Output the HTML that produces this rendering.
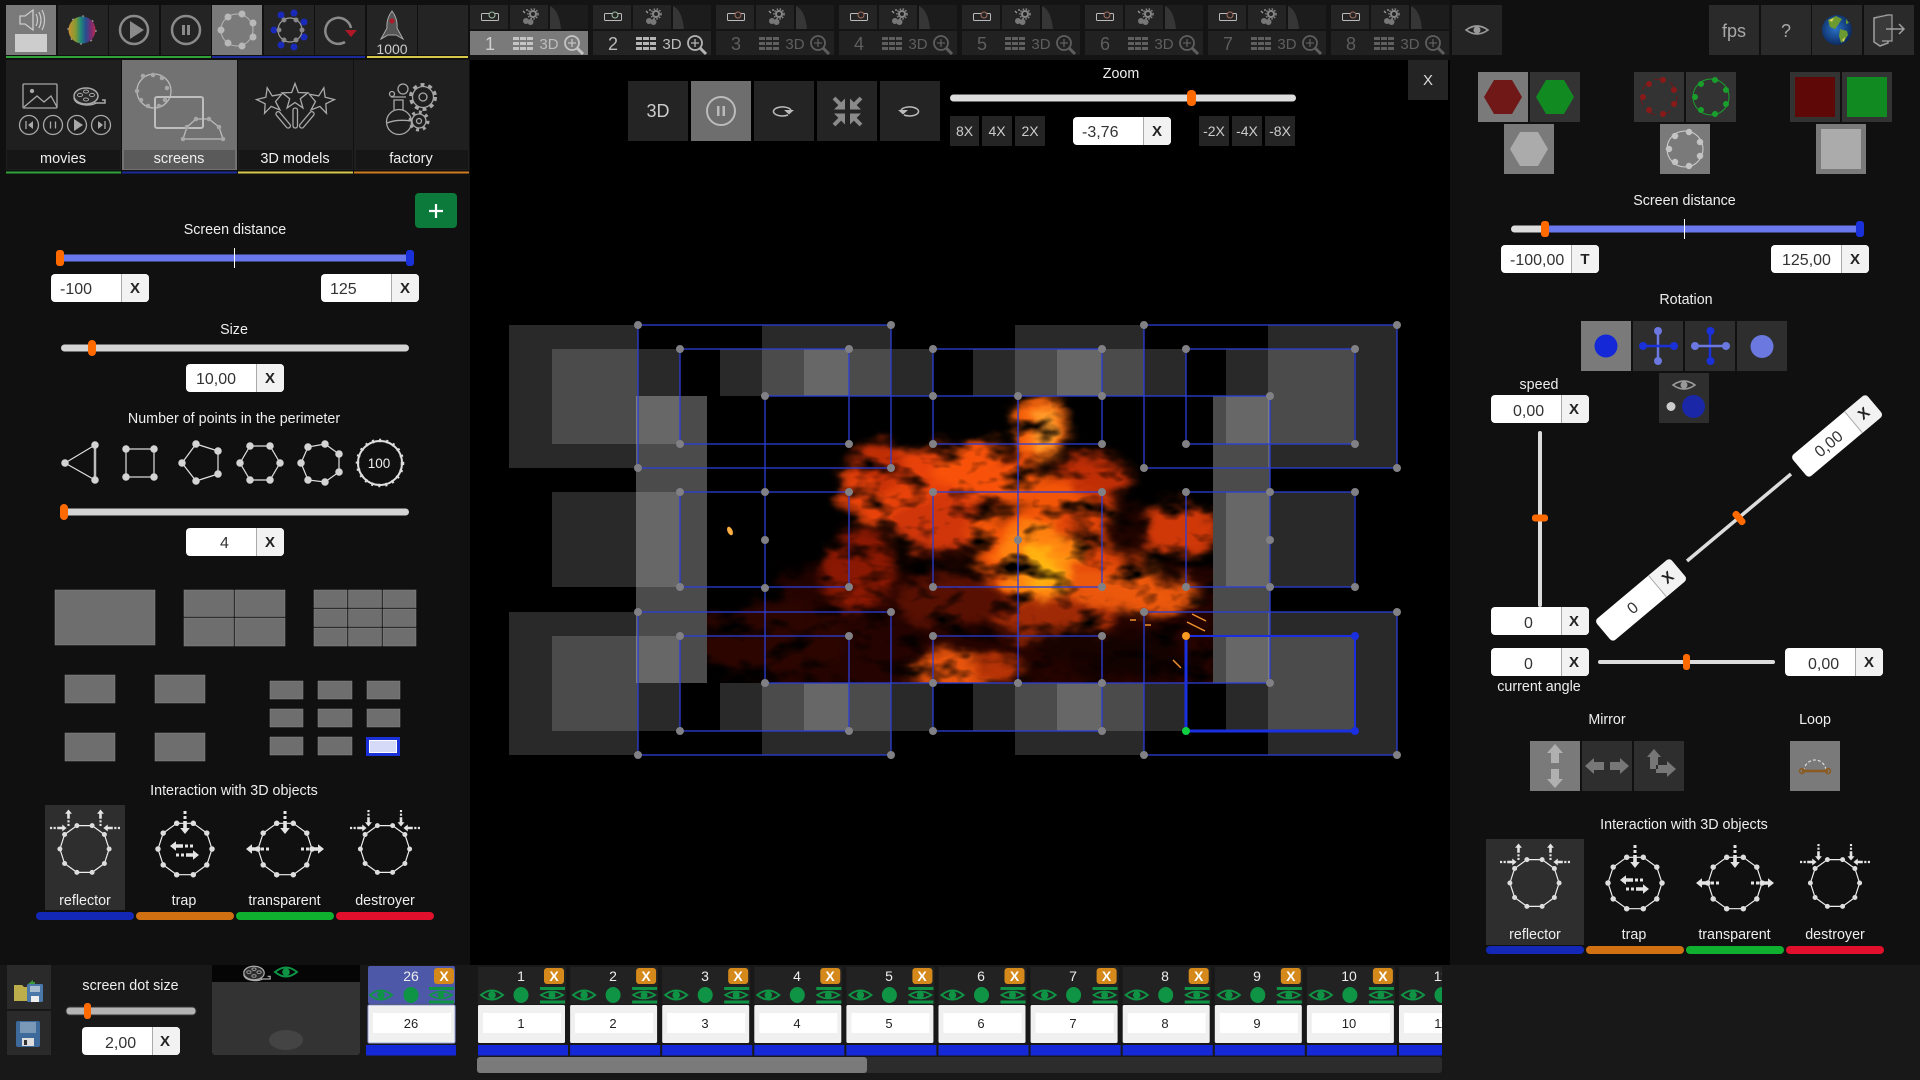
<!DOCTYPE html>
<html><head><meta charset="utf-8"><title>Screens</title>
<style>
html,body{margin:0;padding:0;background:#000;width:1920px;height:1080px;overflow:hidden}
svg{display:block;position:absolute;left:0;top:0}
text{font-family:"Liberation Sans",sans-serif}
.l{font-size:14.300px;fill:#eee;text-anchor:middle}
.v{font-size:16px;fill:#333}
.x{font-size:15px;font-weight:bold;fill:#222;text-anchor:middle}
.b{font-size:14px;fill:#ccc;text-anchor:middle}
.n{font-size:18px;text-anchor:middle}
.d{font-size:15px;text-anchor:middle}
.w{font-size:14px;fill:#eee;text-anchor:middle}
.k{font-size:13px;fill:#222;text-anchor:middle}
.xw{font-size:14px;font-weight:bold;fill:#fff;text-anchor:middle}
</style></head><body>
<svg width="1920" height="1080" viewBox="0 0 1920 1080" xmlns="http://www.w3.org/2000/svg">
<defs>
<filter id="fl" x="0" y="0" width="1" height="1" color-interpolation-filters="sRGB">
<feGaussianBlur in="SourceGraphic" stdDeviation="5" result="a"/>
<feTurbulence type="fractalNoise" baseFrequency=".028 .05" numOctaves="3" seed="7" result="n"/>
<feDisplacementMap in="a" in2="n" scale="26" xChannelSelector="R" yChannelSelector="G" result="d"/>
<feColorMatrix in="n" type="matrix" values="3 0 0 0 -.55  3 0 0 0 -.55  3 0 0 0 -.55  0 0 0 0 1" result="m"/>
<feBlend in="d" in2="m" mode="multiply"/>
</filter>
<linearGradient id="rb" x1="0" x2="1" y1="0" y2="0"><stop offset="0" stop-color="#c89030"/><stop offset=".25" stop-color="#8a9a30"/><stop offset=".45" stop-color="#208a78"/><stop offset=".65" stop-color="#2a4a90"/><stop offset=".85" stop-color="#802a70"/><stop offset="1" stop-color="#b83050"/></linearGradient>
<radialGradient id="gl" cx=".45" cy=".45" r=".6"><stop offset="0" stop-color="#2a72c8"/><stop offset="1" stop-color="#0a2458"/></radialGradient>
<g id="ib"><rect width="98" height="28" rx="4" fill="#fff"/><path d="M70 0h24a4 4 0 0 1 4 4v20a4 4 0 0 1-4 4h-24z" fill="#f2f2f2"/><path d="M70.500 0v28" stroke="#aaa"/></g>
<g id="pg"><rect x="0" y="5" width="38" height="24" fill="#242424"/><rect x="40" y="5" width="38" height="24" fill="#242424"/><rect x="80" y="5" width="38" height="24" fill="#1c1c1c"/><path d="M80 6q9 4 11 23h-11z" fill="#363636"/><rect x="11.500" y="13.500" width="17" height="7" rx="1" fill="none" stroke="#bbb"/><circle cx="22" cy="15" r="3" fill="#242424" stroke="currentColor"/><circle cx="63" cy="14" r="3" fill="none" stroke="#888" stroke-width="2"/><circle cx="63" cy="14" r="5" fill="none" stroke="#888" stroke-width="1.500" stroke-dasharray="1.500 1.500"/><circle cx="56" cy="21" r="3" fill="#777"/><circle cx="60.500" cy="22" r="3" fill="#777"/><path d="M53 11l2 2M57 9v2" stroke="#999" stroke-width="1.300"/></g>
<g id="pb" fill="none" stroke="currentColor"><path d="M43 38.500h20M43 43.500h20M43 48.500h20" stroke-width="3" stroke-dasharray="6 1"/><circle cx="102" cy="43" r="7" stroke-width="1.800"/><path d="M107 48l6 6" stroke-width="3"/><path d="M98 43h8M102 39v8" stroke-width="1.300"/></g>
<g id="eye"><path d="M-11 0Q0-9 11 0Q0 9-11 0z" fill="none" stroke="#0f9445" stroke-width="2"/><circle r="3.800" fill="#0f9445"/></g>
<g id="gb"><path d="M-11 0Q0-8 11 0Q0 8-11 0z" fill="none" stroke="#999" stroke-width="1.600"/><circle r="3.500" fill="#999"/></g>
<g id="reel"><ellipse cx="0" cy="0" rx="12" ry="8" fill="#2a2a2a" stroke="#aaa" stroke-width="1.500"/><path d="M-12 2q1 6 12 7 7 0 10-2" fill="none" stroke="#aaa" stroke-width="1.500"/><g fill="#222" stroke="#aaa"><ellipse cx="-6" cy="-1" rx="2.500" ry="1.600"/><ellipse cx="6" cy="-1" rx="2.500" ry="1.600"/><ellipse cx="0" cy="-4.500" rx="2.500" ry="1.500"/><ellipse cx="0" cy="3.500" rx="2.500" ry="1.500"/></g><path d="M8 7h11v-3h-3" fill="none" stroke="#aaa" stroke-width="1.500"/></g>
<g id="cell"><rect y="967" width="88" height="37" fill="#222"/><use href="#eye" x="14" y="995"/><ellipse cx="43" cy="995" rx="7.500" ry="8" fill="#0f9445"/><path d="M63 995q11-7 22 0q-11 7-22 0z" fill="none" stroke="#0f9445" stroke-width="1.800"/><circle cx="74" cy="995" r="3.500" fill="#0f9445"/><path d="M62 988.500h25M62 1002h25" stroke="#0f9445" stroke-width="3"/><rect x="66" y="968" width="20" height="16" rx="3" fill="#d4891a"/><rect x="0" y="1005" width="87" height="38" rx="1.500" fill="#f0f0f0"/><rect x="5" y="1013" width="78" height="20" fill="#fff"/><rect x="0" y="1045" width="90" height="10.500" fill="#1428d8"/></g>
<g id="ar"><path d="M0-1.500h3v3h-3zM5-1.500h3v3h-3z" fill="#e4e4e4"/><path d="M10-1.800h7v-3l6 4.800-6 4.800v-3h-7z" fill="#e4e4e4"/></g>
<g id="r1"><polygon points="7.600,-23.400 19.900,-14.500 24.600,0 19.900,14.500 7.600,23.400 -7.600,23.400 -19.900,14.500 -24.600,0 -19.900,-14.500 -7.600,-23.400" fill="none" stroke="#eee" stroke-width="1.200"/><path d="M7.600-23.400h0M19.900-14.500h0M24.600 0h0M19.900 14.500h0M7.600 23.400h0M-7.600 23.400h0M-19.900 14.500h0M-24.600 0h0M-19.900-14.500h0M-7.600-23.400h0" stroke="#ddd" stroke-width="5" stroke-linecap="round"/></g>
<g id="r2"><polygon points="8.300,-25.700 21.800,-15.900 27,0 21.800,15.900 8.300,25.700 -8.300,25.700 -21.800,15.900 -27,0 -21.800,-15.900 -8.300,-25.700" fill="none" stroke="#eee" stroke-width="1.200"/><path d="M8.300-25.700h0M21.800-15.900h0M27 0h0M21.800 15.900h0M8.300 25.700h0M-8.300 25.700h0M-21.800 15.900h0M-27 0h0M-21.800-15.900h0M-8.300-25.700h0" stroke="#ddd" stroke-width="5.500" stroke-linecap="round"/></g>
<g id="inter">
<use href="#r1" x="84.500" y="849"/><use href="#r2" x="185" y="849"/><use href="#r2" x="285" y="849"/><use href="#r1" x="385" y="849"/>
<use href="#ar" transform="translate(50 828) scale(.72)"/><use href="#ar" transform="translate(120 828) rotate(180) scale(.72)"/><use href="#ar" transform="translate(68.500 826) rotate(-90) scale(.72)"/><use href="#ar" transform="translate(100.500 826) rotate(-90) scale(.72)"/>
<use href="#ar" transform="translate(350 828) scale(.72)"/><use href="#ar" transform="translate(420 828) rotate(180) scale(.72)"/><use href="#ar" transform="translate(368.500 810) rotate(90) scale(.72)"/><use href="#ar" transform="translate(401 810) rotate(90) scale(.72)"/>
<use href="#ar" transform="translate(185 811) rotate(90)"/><use href="#ar" transform="translate(193 846) rotate(180)"/><use href="#ar" transform="translate(176 855)"/>
<use href="#ar" transform="translate(285 811) rotate(90)"/><use href="#ar" transform="translate(269 849) rotate(180)"/><use href="#ar" transform="translate(301 849)"/>
<rect x="36" y="912" width="98" height="8" rx="4" fill="#1428b8"/><rect x="136" y="912" width="98" height="8" rx="4" fill="#d07010"/><rect x="236" y="912" width="98" height="8" rx="4" fill="#0fb030"/><rect x="336" y="912" width="98" height="8" rx="4" fill="#e0102c"/>
</g>
<polygon id="star" points="0,-13.500 3.300,-4.500 12.800,-4.200 5.300,1.700 7.900,10.900 0,5.500 -7.900,10.900 -5.300,1.700 -12.800,-4.200 -3.300,-4.500" fill="none" stroke="#aaa" stroke-width="1.300"/>
<clipPath id="fc"><rect x="707" y="396" width="506" height="287"/></clipPath>
<clipPath id="sc"><rect x="478" y="960" width="964" height="100"/></clipPath>
</defs>

<!-- backgrounds -->
<rect width="1920" height="1080" fill="#000"/>
<rect width="470" height="965" fill="#101010"/>
<rect x="470" width="980" height="60" fill="#141414"/>
<rect x="1450" width="470" height="965" fill="#101010"/>
<rect y="965" width="1920" height="115" fill="#181818"/>

<!-- top-left buttons -->
<rect x="6" y="5" width="50" height="50" fill="#7a7a7a"/>
<rect x="58" y="5" width="50" height="50" fill="#242424"/><rect x="109" y="5" width="50" height="50" fill="#242424"/><rect x="161" y="5" width="50" height="50" fill="#242424"/>
<rect x="212" y="5" width="50" height="50" fill="#7a7a7a"/>
<rect x="264" y="5" width="50" height="50" fill="#242424"/><rect x="315" y="5" width="50" height="50" fill="#242424"/><rect x="367" y="5" width="50" height="50" fill="#242424"/><rect x="418" y="5" width="50" height="50" fill="#242424"/>
<path d="M6 57h205" stroke="#2fa33a" stroke-width="2"/><path d="M212 57h153" stroke="#1a2a9a" stroke-width="2"/><path d="M367 57h101" stroke="#d8c84a" stroke-width="2"/>
<path d="M20 16h5l8-6v20l-8-6h-5z" fill="none" stroke="#ccc" stroke-width="1.300"/><path d="M36 14q3 6 0 12M39 12q4 8 0 16M42 10q5 10 0 20" fill="none" stroke="#ccc" stroke-width="1.200"/><rect x="15" y="34" width="32" height="18" fill="#cdcdcd"/>
<circle cx="82" cy="30" r="13.500" fill="url(#rb)"/><circle cx="82" cy="30" r="14" fill="none" stroke="#999" stroke-width="1.200" stroke-dasharray="2 9"/>
<circle cx="134" cy="30" r="14" fill="none" stroke="#8a8a8a" stroke-width="2.500"/><path d="M130 21l14 9-14 9z" fill="#8a8a8a"/>
<circle cx="186" cy="30" r="14" fill="none" stroke="#8a8a8a" stroke-width="2.500"/><path d="M182 25h3v10h-3zM187 25h3v10h-3z" fill="#8a8a8a"/>
<g stroke="#b8b8b8"><circle cx="237" cy="30" r="16" fill="none" stroke-width="1"/><path d="M228 17h0M242 14h0M253 23h0M253 37h0M242 46h0M228 43h0M221 30h0" stroke-width="7" stroke-linecap="round"/></g>
<g><path d="M281 15h0M294 13h0M304 22h0M304 37h0M294 47h0M281 45h0M274 30h0" stroke="#1a2ab8" stroke-width="7" stroke-linecap="round"/><circle cx="290" cy="30" r="12" fill="none" stroke="#999" stroke-width="1.200"/><path d="M284 20h0M296 20h0M302 30h0M296 40h0M284 40h0M279 30h0" stroke="#888" stroke-width="5" stroke-linecap="round"/></g>
<path d="M351 28A13 13 0 1 0 345 42" fill="none" stroke="#8a8a8a" stroke-width="2.500"/><path d="M345 30h12l-6 7z" fill="#b01828"/>
<path d="M392 11q6 8 5 17l6 11-7-4h-8l-7 4 6-11q-1-9 5-17z" fill="#555" stroke="#aaa"/><circle cx="392" cy="21" r="2.500" fill="#b01828"/><text x="392" y="54" font-size="14" fill="#ccc" text-anchor="middle">1000</text>

<!-- tabs -->
<rect x="6" y="60" width="115" height="110" fill="#1f1f1f"/><rect x="122" y="60" width="115" height="110" fill="#727272"/><rect x="238" y="60" width="115" height="110" fill="#1f1f1f"/><rect x="354" y="60" width="115" height="110" fill="#1f1f1f"/>
<rect x="7" y="150" width="113" height="19" fill="#161616"/><rect x="124" y="150" width="111" height="19" fill="#5a5a5a"/><rect x="239" y="150" width="113" height="19" fill="#161616"/><rect x="356" y="150" width="112" height="19" fill="#161616"/>
<path d="M6 172.500h115" stroke="#2fa33a" stroke-width="2"/><path d="M122 172.500h115" stroke="#1a2a9a" stroke-width="2"/><path d="M238 172.500h115" stroke="#d8c84a" stroke-width="2"/><path d="M354 172.500h115" stroke="#d07a20" stroke-width="2"/>
<use href="#reel" x="86" y="96"/>
<g fill="none" stroke="#a8a8a8" stroke-width="1.300">
<rect x="23" y="84" width="34" height="24" rx="1"/><path d="M24 107l13-11 7 6 7-6 6 11"/><circle cx="32" cy="91" r="1.500" fill="#a8a8a8"/>
<circle cx="29" cy="125" r="9.500"/><circle cx="53" cy="125" r="9.500"/><circle cx="77" cy="125" r="9.500"/><circle cx="101" cy="125" r="9.500"/>
<path d="M26 121v8M50.500 121.500v7M55.500 121.500v7M105 121v8"/>
<circle cx="154" cy="91" r="17" stroke="#bbb"/><rect x="155" y="97" width="48" height="31" rx="2" stroke="#bdbdbd" stroke-width="2"/><path d="M183 139l4-12 9-8 13 0 10 8 4 12z" stroke="#bbb"/>
<use href="#star" transform="translate(270 101) rotate(-12)"/><use href="#star" transform="translate(295 97)"/><use href="#star" transform="translate(321 101) rotate(12)"/>
<rect x="293" y="108" width="4.500" height="20" rx="2.200"/><rect x="281" y="110" width="4.500" height="20" rx="2.200" transform="rotate(-40 283 120)"/><rect x="304.500" y="110" width="4.500" height="20" rx="2.200" transform="rotate(40 307 120)"/>
<circle cx="399" cy="122" r="12.500"/><path d="M394 110v-10h9v10M391 97h15M387 123q10-4 24-2"/><circle cx="403" cy="89" r="5"/><circle cx="392" cy="94" r="2.500"/>
<circle cx="423" cy="97" r="10.500"/><circle cx="423" cy="97" r="12.500" stroke-width="3" stroke-dasharray="4 4"/><circle cx="423" cy="97" r="4"/><circle cx="419" cy="121" r="7"/><circle cx="419" cy="121" r="9" stroke-width="3" stroke-dasharray="3 4"/><circle cx="419" cy="121" r="2.500"/>
</g>
<path d="M33 121l-5 4 5 4zM74 119l9 6-9 6zM98 121l5 4-5 4z" fill="#a8a8a8"/>
<path d="M143 76h0M153 75h0M162 78h0M167 88h0M165 100h0M159 106h0M148 106h0M141 100h0M137 91h0M183 139h0M187 127h0M196 119h0M209 119h0M219 127h0M223 139h0" stroke="#a8a8a8" stroke-width="4.500" stroke-linecap="round"/>
<text x="63" y="163" class="w" style="font-size:14.500px">movies</text><text x="179" y="163" class="w" style="font-size:14.500px">screens</text><text x="295" y="163" class="w" style="font-size:14.500px">3D models</text><text x="411" y="163" class="w" style="font-size:14.500px">factory</text>

<!-- top projector groups -->
<rect x="470" y="31" width="118" height="24" fill="#7a7a7a"/><rect x="593" y="31" width="118" height="24" fill="#242424"/><rect x="716" y="31" width="118" height="24" fill="#212121"/><rect x="839" y="31" width="118" height="24" fill="#212121"/><rect x="962" y="31" width="118" height="24" fill="#212121"/><rect x="1085" y="31" width="118" height="24" fill="#212121"/><rect x="1208" y="31" width="118" height="24" fill="#212121"/><rect x="1331" y="31" width="118" height="24" fill="#212121"/>
<g style="color:#9fc0a8"><use href="#pg" x="470"/><use href="#pg" x="593"/></g>
<g style="color:#a87060"><use href="#pg" x="716"/><use href="#pg" x="839"/><use href="#pg" x="962"/><use href="#pg" x="1085"/><use href="#pg" x="1208"/><use href="#pg" x="1331"/></g>
<g style="color:#c4c4c4"><use href="#pb" x="470"/></g><g style="color:#b4b4b4"><use href="#pb" x="593"/></g>
<g style="color:#5e5e5e"><use href="#pb" x="716"/><use href="#pb" x="839"/><use href="#pb" x="962"/><use href="#pb" x="1085"/><use href="#pb" x="1208"/><use href="#pb" x="1331"/></g>
<g fill="#cfcfcf"><text x="490" y="50" class="n">1</text><text x="613" y="50" class="n" fill="#bbb">2</text></g>
<g fill="#bdbdbd"><text x="549" y="49" class="d">3D</text><text x="672" y="49" class="d">3D</text></g>
<g fill="#5e5e5e"><text x="736" y="50" class="n">3</text><text x="859" y="50" class="n">4</text><text x="982" y="50" class="n">5</text><text x="1105" y="50" class="n">6</text><text x="1228" y="50" class="n">7</text><text x="1351" y="50" class="n">8</text>
<text x="795" y="49" class="d">3D</text><text x="918" y="49" class="d">3D</text><text x="1041" y="49" class="d">3D</text><text x="1164" y="49" class="d">3D</text><text x="1287" y="49" class="d">3D</text><text x="1410" y="49" class="d">3D</text></g>

<!-- canvas grey layers -->
<g fill="#fff" fill-opacity=".16">
<rect x="509" y="325" width="129" height="143"/><rect x="509" y="612" width="129" height="143"/>
<rect x="552" y="349" width="128" height="95"/><rect x="552" y="492" width="128" height="95"/><rect x="552" y="636" width="128" height="95"/>
<rect x="636" y="396" width="71" height="287"/><rect x="636" y="396" width="71" height="287"/>
<rect x="1213" y="396" width="57" height="287"/><rect x="1213" y="396" width="57" height="287"/>
<rect x="1226" y="349" width="128" height="95"/><rect x="1226" y="492" width="128" height="95"/><rect x="1226" y="636" width="128" height="95"/>
<rect x="1268" y="325" width="129" height="143"/><rect x="1268" y="612" width="129" height="143"/>
<rect x="720" y="349" width="129" height="47"/><rect x="804" y="349" width="129" height="47"/><rect x="762" y="325" width="129" height="71"/>
<rect x="973" y="349" width="129" height="47"/><rect x="1057" y="349" width="129" height="47"/><rect x="1015" y="325" width="129" height="71"/>
<rect x="720" y="683" width="129" height="48"/><rect x="804" y="683" width="129" height="48"/><rect x="762" y="683" width="129" height="72"/>
<rect x="973" y="683" width="129" height="48"/><rect x="1057" y="683" width="129" height="48"/><rect x="1015" y="683" width="129" height="72"/>
</g>

<!-- fire -->
<g clip-path="url(#fc)">
<rect x="707" y="396" width="506" height="287" fill="#000"/>
<g filter="url(#fl)">
<rect x="680" y="380" width="560" height="320" fill="#000"/>
<rect x="780" y="570" width="440" height="130" fill="#240300"/>
<ellipse cx="770" cy="640" rx="80" ry="36" fill="#2c0500"/>
<ellipse cx="860" cy="570" rx="36" ry="42" fill="#8a1802"/>
<ellipse cx="925" cy="490" rx="88" ry="42" fill="#e8420a"/>
<ellipse cx="985" cy="470" rx="50" ry="26" fill="#f8520a"/>
<ellipse cx="1040" cy="428" rx="28" ry="34" fill="#f8620c"/>
<ellipse cx="1046" cy="430" rx="14" ry="24" fill="#ff9a28"/>
<ellipse cx="880" cy="465" rx="26" ry="22" fill="#c02e06"/>
<ellipse cx="1090" cy="480" rx="42" ry="24" fill="#c02e06"/>
<ellipse cx="950" cy="525" rx="60" ry="26" fill="#d0360a"/>
<ellipse cx="1040" cy="540" rx="70" ry="64" fill="#f45608"/>
<ellipse cx="1095" cy="548" rx="50" ry="48" fill="#e04408"/>
<ellipse cx="1178" cy="530" rx="44" ry="24" fill="#d03808"/>
<ellipse cx="1120" cy="592" rx="78" ry="24" fill="#ec580c"/>
<ellipse cx="1055" cy="620" rx="64" ry="22" fill="#a02a06"/>
<ellipse cx="955" cy="600" rx="56" ry="26" fill="#581002"/>
<ellipse cx="955" cy="672" rx="50" ry="20" fill="#e8540c"/>
<ellipse cx="1000" cy="668" rx="24" ry="14" fill="#b83406"/>
<ellipse cx="1040" cy="560" rx="40" ry="38" fill="#ff8410"/>
<ellipse cx="1045" cy="565" rx="20" ry="18" fill="#ffb410"/>
<ellipse cx="1128" cy="530" rx="22" ry="28" fill="#200400"/>
<ellipse cx="990" cy="505" rx="18" ry="7" fill="#300600"/>
<ellipse cx="1170" cy="575" rx="14" ry="12" fill="#200400"/>
<ellipse cx="945" cy="555" rx="42" ry="8" fill="#240500"/>
<ellipse cx="1130" cy="658" rx="60" ry="20" fill="#120200"/>
<ellipse cx="1010" cy="456" rx="12" ry="6" fill="#300800"/>
<ellipse cx="1075" cy="642" rx="40" ry="13" fill="#180300"/>
<path d="M1000 520l30-18M990 540l-10 20M1090 500l-20 40" stroke="#140200" stroke-width="4" fill="none"/>
</g>
<path d="M1187 622l18 9M1192 614l14 7M1173 660l8 8M1130 620h6M1145 625h6" stroke="#f09030" stroke-width="1.500"/>
<ellipse cx="730" cy="531" rx="2.500" ry="4.500" fill="#ffb040" transform="rotate(-25 730 531)"/>
</g>

<!-- blue lines -->
<g fill="none" stroke="#2c3ed6" stroke-width="1.300">
<rect x="638" y="325" width="253" height="143"/><rect x="638" y="612" width="253" height="143"/>
<rect x="680" y="349" width="169" height="95"/><rect x="680" y="492" width="169" height="95"/><rect x="680" y="636" width="169" height="95"/>
<rect x="933" y="349" width="169" height="95"/><rect x="933" y="492" width="169" height="95"/><rect x="933" y="636" width="169" height="95"/>
<rect x="1186" y="349" width="169" height="95"/><rect x="1186" y="492" width="169" height="95"/>
<rect x="1144" y="325" width="253" height="143"/><rect x="1144" y="612" width="253" height="143"/>
<rect x="765" y="396" width="505" height="287"/><path d="M1018 396v287"/>
</g>
<path d="M1186 636h169v95h-169" fill="none" stroke="#1a30e0" stroke-width="2"/><path d="M1186 636v95h169" fill="none" stroke="#1a30e0" stroke-width="3"/>
<path d="M638 325h0M891 325h0M638 468h0M891 468h0M680 349h0M849 349h0M680 444h0M849 444h0M638 612h0M891 612h0M638 755h0M891 755h0M680 492h0M849 492h0M680 587h0M849 587h0M680 636h0M849 636h0M680 731h0M849 731h0M933 349h0M1102 349h0M933 444h0M1102 444h0M933 492h0M1102 492h0M933 587h0M1102 587h0M933 636h0M1102 636h0M933 731h0M1102 731h0M1186 349h0M1355 349h0M1186 444h0M1355 444h0M1186 492h0M1355 492h0M1186 587h0M1355 587h0M1144 325h0M1397 325h0M1144 468h0M1397 468h0M1144 612h0M1397 612h0M1144 755h0M1397 755h0M765 396h0M933 396h0M1018 396h0M1102 396h0M1270 396h0M765 492h0M765 540h0M765 588h0M1270 492h0M1270 540h0M1270 587h0M765 683h0M933 683h0M1018 683h0M1102 683h0M1270 683h0M1018 540h0" stroke="#808085" stroke-width="8" stroke-linecap="round"/>
<circle cx="1186" cy="636" r="4" fill="#ff9a20"/><circle cx="1355" cy="636" r="4" fill="#1a30e0"/><circle cx="1186" cy="731" r="4" fill="#10d040"/><circle cx="1355" cy="731" r="4" fill="#1a30e0"/>

<!-- center toolbar -->
<rect x="628" y="81" width="60" height="60" fill="#242424"/><rect x="691" y="81" width="60" height="60" fill="#6e6e6e"/><rect x="754" y="81" width="60" height="60" fill="#242424"/><rect x="817" y="81" width="60" height="60" fill="#242424"/><rect x="880" y="81" width="60" height="60" fill="#242424"/>
<text x="658" y="117" font-size="18" fill="#ccc" text-anchor="middle">3D</text>
<circle cx="721" cy="111" r="14" fill="none" stroke="#bbb" stroke-width="2"/><path d="M717 106h2.500v10h-2.500zM722.500 106h2.500v10h-2.500z" fill="#bbb"/>
<path d="M791 110a9 4.500 0 1 0-3 5" fill="none" stroke="#bbb" stroke-width="1.500"/><path d="M784 110h10l-5 4.500z" fill="#bbb"/>
<path d="M901 110a9 4.500 0 1 1 3 5" fill="none" stroke="#bbb" stroke-width="1.500"/><path d="M908 110h-10l5 4.500z" fill="#bbb"/>
<g fill="#8a8a8a" stroke="#8a8a8a"><path d="M834 98l7 7" stroke-width="4" fill="none"/><path d="M845 109.500v-11l-11 11z" stroke="none"/><path d="M861 98l-7 7" stroke-width="4" fill="none"/><path d="M850 109.500v-11l11 11z" stroke="none"/><path d="M834 125l7-7" stroke-width="4" fill="none"/><path d="M845 113.500v11l-11-11z" stroke="none"/><path d="M861 125l-7-7" stroke-width="4" fill="none"/><path d="M850 113.500v11l11-11z" stroke="none"/></g>
<text x="1121" y="78" class="l">Zoom</text>
<rect x="950" y="94.500" width="346" height="7" rx="3.500" fill="#ddd"/><rect x="1187" y="90" width="9" height="16" rx="4" fill="#ff6a00"/>
<rect x="950" y="116" width="29" height="30" fill="#242424"/><rect x="982" y="116" width="30" height="30" fill="#242424"/><rect x="1015" y="116" width="30" height="30" fill="#242424"/><rect x="1199" y="116" width="30" height="30" fill="#242424"/><rect x="1232" y="116" width="30" height="30" fill="#242424"/><rect x="1265" y="116" width="30" height="30" fill="#242424"/>
<text x="964.500" y="136" class="b">8X</text><text x="997" y="136" class="b">4X</text><text x="1030" y="136" class="b">2X</text><text x="1214" y="136" class="b">-2X</text><text x="1247" y="136" class="b">-4X</text><text x="1280" y="136" class="b">-8X</text>
<use href="#ib" x="1073" y="117"/><text x="1082" y="137" class="v">-3,76</text><text x="1157" y="136" class="x">X</text>
<rect x="1408" y="60" width="40" height="40" fill="#242424"/><text x="1428" y="85" font-size="15" fill="#ddd" text-anchor="middle">X</text>

<!-- left panel controls -->
<rect x="415" y="193" width="42" height="35" rx="4" fill="#0b7a3b"/><path d="M436 204v14M429 211h14" stroke="#fff" stroke-width="2.200"/>
<text x="235" y="234" class="l">Screen distance</text>
<rect x="58" y="254.500" width="352" height="7" fill="#6a78ee"/><rect x="56" y="250" width="8" height="16" rx="3" fill="#ff6a00"/><rect x="406" y="250" width="8" height="16" rx="3" fill="#1a30d8"/><path d="M234.500 248v20" stroke="#fff"/>
<use href="#ib" x="51" y="274"/><text x="60" y="294" class="v">-100</text><text x="135" y="293" class="x">X</text>
<use href="#ib" x="321" y="274"/><text x="330" y="294" class="v">125</text><text x="405" y="293" class="x">X</text>
<text x="234" y="334" class="l">Size</text>
<rect x="61" y="344.500" width="348" height="7" rx="3.500" fill="#d4d4d4"/><rect x="88" y="340" width="8" height="16" rx="4" fill="#ff6a00"/>
<use href="#ib" x="186" y="364"/><text x="196" y="384" class="v">10,00</text><text x="270" y="383" class="x">X</text>
<text x="234" y="423" class="l">Number of points in the perimeter</text>
<g fill="none" stroke="#e0e0e0" stroke-width="1.200"><path d="M65 463l30-18v35z"/><path d="M95 445v35" stroke-width="2.500" stroke="#bbb"/><rect x="126" y="449" width="28" height="28"/><polygon points="196,444 218,451 218,474 196,481 182,463"/><polygon points="250,446 270,446 280,463 270,480 250,480 240,463"/><polygon points="325,444 339,454 339,472 325,482 308,480 301,463 308,447"/><circle cx="380" cy="463" r="22" stroke-width="2"/><circle cx="380" cy="463" r="22.500" stroke-width="3.500" stroke-dasharray="2 5" stroke="#ddd"/></g>
<path d="M65 463h0M95 445h0M95 480h0M126 449h0M154 449h0M126 477h0M154 477h0M196 444h0M218 451h0M218 474h0M196 481h0M182 463h0M250 446h0M270 446h0M280 463h0M270 480h0M250 480h0M240 463h0M325 444h0M339 454h0M339 472h0M325 482h0M308 480h0M301 463h0M308 447h0" stroke="#d4d4d4" stroke-width="7.500" stroke-linecap="round"/>
<text x="379" y="468" font-size="13.500" fill="#eee" text-anchor="middle">100</text>
<rect x="61" y="508.500" width="348" height="7" rx="3.500" fill="#d4d4d4"/><rect x="60" y="504" width="8" height="16" rx="4" fill="#ff6a00"/>
<use href="#ib" x="186" y="528"/><text x="220" y="548" class="v">4</text><text x="270" y="547" class="x">X</text>

<!-- screen layouts -->
<g fill="#6e6e6e" stroke="#8a8a8a" stroke-width=".5">
<rect x="55" y="590" width="100" height="55"/>
<rect x="184" y="590" width="49.500" height="26.500"/><rect x="235" y="590" width="50" height="26.500"/><rect x="184" y="618" width="49.500" height="28"/><rect x="235" y="618" width="50" height="28"/>
<rect x="314" y="590" width="33" height="17.500"/><rect x="348.500" y="590" width="33" height="17.500"/><rect x="383" y="590" width="33" height="17.500"/><rect x="314" y="609" width="33" height="17.500"/><rect x="348.500" y="609" width="33" height="17.500"/><rect x="383" y="609" width="33" height="17.500"/><rect x="314" y="628" width="33" height="18"/><rect x="348.500" y="628" width="33" height="18"/><rect x="383" y="628" width="33" height="18"/>
<rect x="65" y="675" width="50" height="28"/><rect x="155" y="675" width="50" height="28"/><rect x="65" y="733" width="50" height="28"/><rect x="155" y="733" width="50" height="28"/>
<rect x="270" y="681" width="33" height="18"/><rect x="318" y="681" width="34" height="18"/><rect x="367" y="681" width="33" height="18"/><rect x="270" y="709" width="33" height="18"/><rect x="318" y="709" width="34" height="18"/><rect x="367" y="709" width="33" height="18"/><rect x="270" y="737" width="33" height="18"/><rect x="318" y="737" width="34" height="18"/>
</g>
<rect x="367.500" y="738.500" width="31" height="16" fill="#d5daf8" stroke="#1a30d8" stroke-width="3"/><rect x="369.500" y="740.500" width="27" height="12" fill="none" stroke="#fff"/>

<text x="234" y="795" class="l">Interaction with 3D objects</text>
<rect x="45" y="805" width="80" height="105" fill="#2e2e2e"/>
<use href="#inter"/>
<text x="85" y="905" class="l">reflector</text><text x="184" y="905" class="l">trap</text><text x="284.500" y="905" class="l">transparent</text><text x="385" y="905" class="l">destroyer</text>

<!-- right panel top -->
<rect x="1452" y="5" width="50" height="50" fill="#242424"/><use href="#gb" x="1477" y="30"/>
<rect x="1709" y="5" width="50" height="50" fill="#2a2a2a"/><rect x="1761" y="5" width="50" height="50" fill="#2a2a2a"/><rect x="1812" y="5" width="50" height="50" fill="#2a2a2a"/><rect x="1864" y="5" width="50" height="50" fill="#2a2a2a"/>
<text x="1734" y="37" font-size="18" fill="#a8a8a8" text-anchor="middle">fps</text><text x="1786" y="37" font-size="18" fill="#a8a8a8" text-anchor="middle">?</text>
<circle cx="1837" cy="30" r="15" fill="url(#gl)"/><path d="M1828 20l8-4 6 3-4 6-3 4-5-2zM1840 29l7 2 1 4-4 6-3 2-2-7zM1846 19l3 4-3 1z" fill="#6a9a30"/><path d="M1829 20l5-2-2 4zM1842 40l3-3-1 5z" fill="#d8d060"/>
<path d="M1874 18l14-3v28l-8 3-6-4z" fill="#3a3a3a" stroke="#a0a0a0" stroke-width="1.500"/><rect x="1877" y="15" width="15" height="26" fill="#3a3a3a"/><path d="M1874 18l14-3h4v26h-10" fill="none" stroke="#a0a0a0" stroke-width="1.200"/><path d="M1886 29h18M1899 24l5 5-5 5" fill="none" stroke="#a0a0a0" stroke-width="1.500"/>

<rect x="1478" y="72" width="50" height="50" fill="#7a7a7a"/><rect x="1530" y="72" width="50" height="50" fill="#333"/><rect x="1504" y="124" width="50" height="50" fill="#7a7a7a"/>
<rect x="1634" y="72" width="50" height="50" fill="#333"/><rect x="1686" y="72" width="50" height="50" fill="#333"/><rect x="1660" y="124" width="50" height="50" fill="#7a7a7a"/>
<rect x="1790" y="72" width="50" height="50" fill="#333"/><rect x="1842" y="72" width="50" height="50" fill="#333"/><rect x="1816" y="124" width="50" height="50" fill="#7a7a7a"/>
<polygon points="1484,97 1494,80 1512,80 1522,97 1512,114 1494,114" fill="#701818"/><polygon points="1536,97 1546,80 1564,80 1574,97 1564,114 1546,114" fill="#128a22"/><polygon points="1510,149 1520,132 1538,132 1548,149 1538,166 1520,166" fill="#ababab"/>
<g fill="none"><circle cx="1659" cy="97" r="18" stroke="#701818" stroke-dasharray="8 8"/><circle cx="1711" cy="97" r="18" stroke="#19a02c"/><circle cx="1685" cy="149" r="18" stroke="#d0d0d0"/></g>
<path d="M1649 84h0M1663 80h0M1674 90h0M1674 104h0M1663 114h0M1649 110h0M1643 97h0" stroke="#8a1a1a" stroke-width="6" stroke-linecap="round"/>
<path d="M1701 84h0M1715 80h0M1726 90h0M1726 104h0M1715 114h0M1701 110h0M1695 97h0" stroke="#19a02c" stroke-width="6" stroke-linecap="round"/>
<path d="M1675 136h0M1689 132h0M1700 142h0M1700 156h0M1689 166h0M1675 162h0M1669 149h0" stroke="#c4c4c4" stroke-width="6.500" stroke-linecap="round"/>
<rect x="1795" y="77" width="40" height="40" fill="#5e0808"/><rect x="1847" y="77" width="40" height="40" fill="#128a22"/><rect x="1821" y="129" width="40" height="40" fill="#ababab"/>

<text x="1684.500" y="205" class="l">Screen distance</text>
<rect x="1511" y="225.500" width="40" height="7" rx="3.500" fill="#ddd"/><rect x="1545" y="225.500" width="315" height="7" fill="#6a78ee"/><rect x="1541" y="221" width="8" height="16" rx="3" fill="#ff6a00"/><rect x="1856" y="221" width="8" height="16" rx="3" fill="#1a30d8"/><path d="M1684.500 219v20" stroke="#fff"/>
<use href="#ib" x="1501" y="245"/><text x="1510" y="265" class="v">-100,00</text><text x="1585" y="264" class="x">T</text>
<use href="#ib" x="1771" y="245"/><text x="1782" y="265" class="v">125,00</text><text x="1855" y="264" class="x">X</text>

<text x="1686" y="304" class="l">Rotation</text>
<rect x="1581" y="321" width="50" height="50" fill="#7a7a7a"/><rect x="1633" y="321" width="50" height="50" fill="#2e2e2e"/><rect x="1685" y="321" width="50" height="50" fill="#2e2e2e"/><rect x="1737" y="321" width="50" height="50" fill="#2e2e2e"/>
<circle cx="1606" cy="346" r="11.500" fill="#1428d8"/>
<path d="M1658 330v32" stroke="#6a78e0" stroke-width="2.500"/><path d="M1643 346h30" stroke="#1a30d8" stroke-width="2.500"/><circle cx="1658" cy="331" r="4" fill="#6a78e0"/><circle cx="1658" cy="361" r="4" fill="#6a78e0"/><circle cx="1643" cy="346" r="4" fill="#1a30d8"/><circle cx="1674" cy="346" r="4" fill="#1a30d8"/>
<path d="M1710 331v30" stroke="#1a30d8" stroke-width="2.500"/><path d="M1695 346h31" stroke="#6a78e0" stroke-width="2.500"/><circle cx="1710.500" cy="331" r="4" fill="#1a30d8"/><circle cx="1710.500" cy="361" r="4" fill="#1a30d8"/><circle cx="1695" cy="346" r="4" fill="#6a78e0"/><circle cx="1726" cy="346" r="4" fill="#6a78e0"/>
<circle cx="1762" cy="346.500" r="11.500" fill="#6a78e0"/>
<rect x="1659" y="373" width="50" height="50" fill="#2e2e2e"/><use href="#gb" x="1684" y="385"/><circle cx="1671" cy="406.500" r="4.500" fill="#ccc"/><circle cx="1693.500" cy="406.500" r="11.500" fill="#1a28a8"/>

<text x="1539" y="389" class="l">speed</text>
<use href="#ib" x="1491" y="395"/><text x="1513" y="416" class="v">0,00</text><text x="1574" y="414" class="x">X</text>
<rect x="1538" y="431" width="4" height="176" rx="2" fill="#ddd"/><rect x="1532" y="514.500" width="16" height="7" rx="3" fill="#ff6a00"/>
<use href="#ib" x="1491" y="607"/><text x="1524" y="628" class="v">0</text><text x="1574" y="626" class="x">X</text>
<use href="#ib" x="1491" y="648"/><text x="1524" y="669" class="v">0</text><text x="1574" y="667" class="x">X</text>
<rect x="1598" y="660" width="177" height="4" rx="2" fill="#ddd"/><rect x="1683" y="654" width="7" height="16" rx="3" fill="#ff6a00"/>
<use href="#ib" x="1785" y="648"/><text x="1808" y="669" class="v">0,00</text><text x="1869" y="667" class="x">X</text>
<text x="1539" y="691" class="l">current angle</text>
<g transform="translate(1837 436) rotate(-40)"><use href="#ib" x="-49" y="-14"/><text x="-27" y="6" class="v">0,00</text><text x="35" y="5" class="x">X</text></g>
<g transform="translate(1641 600) rotate(-40)"><use href="#ib" x="-49" y="-14"/><text x="-16" y="6" class="v">0</text><text x="35" y="5" class="x">X</text></g>
<path d="M1687 561l104-87" stroke="#ddd" stroke-width="3.500"/><rect x="1735.500" y="510" width="7" height="16" rx="3" fill="#ff6a00" transform="rotate(-40 1739 518)"/>

<text x="1607" y="724" class="l">Mirror</text><text x="1815" y="724" class="l">Loop</text>
<rect x="1530" y="741" width="50" height="50" fill="#7a7a7a"/><rect x="1582" y="741" width="50" height="50" fill="#2e2e2e"/><rect x="1634" y="741" width="50" height="50" fill="#2e2e2e"/><rect x="1790" y="741" width="50" height="50" fill="#7a7a7a"/>
<path d="M1555 744l8 9h-4v10h-8v-10h-4zM1555 788l8-9h-4v-10h-8v10h-4z" fill="#b0b0b0"/>
<path d="M1585 766l9-8v4h10v8h-10v4zM1629 766l-9-8v4h-10v8h10v4z" fill="#777"/>
<path d="M1654 749l7 8h-3v12h-8v-12h-3zM1676 769l-9-8v4h-11v8h11v4z" fill="#777"/>
<path d="M1804 771a11 11 0 0 1 22 0" fill="none" stroke="#ddd" stroke-width="1.200" stroke-dasharray="3 2"/><path d="M1802 771h26" stroke="#8a5a20" stroke-width="2.500"/><circle cx="1802" cy="771" r="2.500" fill="none" stroke="#8a5a20" stroke-width="1.500"/><circle cx="1828" cy="771" r="2.500" fill="none" stroke="#8a5a20" stroke-width="1.500"/>

<text x="1684" y="829" class="l">Interaction with 3D objects</text>
<rect x="1486" y="839" width="98" height="106" fill="#2e2e2e"/>
<use href="#inter" transform="translate(1450 34)"/>
<text x="1535" y="939" class="l">reflector</text><text x="1634" y="939" class="l">trap</text><text x="1734.500" y="939" class="l">transparent</text><text x="1835" y="939" class="l">destroyer</text>

<!-- bottom bar -->
<rect x="7" y="965" width="44" height="44" fill="#2a2a2a"/><rect x="7" y="1011" width="44" height="44" fill="#2a2a2a"/>
<path d="M14 985h8l2 2h11v14h-21z" fill="#bcae4a"/><path d="M28 984l5-4v2h2v3h-3z" fill="#3a9a3a"/><rect x="27" y="984" width="16" height="18" rx="1.500" fill="#4a78a8"/><rect x="30" y="986" width="10" height="6" fill="#a8bcd0"/><rect x="31" y="996" width="8" height="6" fill="#eee"/>
<rect x="16" y="1021" width="24" height="26" rx="2" fill="#3d6a9a"/><rect x="20" y="1022" width="16" height="11" fill="#7a98b8"/><rect x="22" y="1038" width="12" height="8" fill="#ddd"/><rect x="24" y="1040" width="3" height="5" fill="#333"/>
<text x="130.500" y="990" class="l">screen dot size</text>
<rect x="66" y="1007" width="130" height="8" rx="3.500" fill="#b4b4b4" stroke="#333"/><rect x="84" y="1003" width="7" height="16" rx="3" fill="#ff6a00"/>
<use href="#ib" x="82" y="1027"/><text x="105" y="1048" class="v">2,00</text><text x="165" y="1046" class="x">X</text>
<rect x="212" y="965" width="148" height="90" rx="3" fill="#333"/><rect x="212" y="965" width="148" height="17" fill="#050505"/>
<use href="#reel" transform="translate(254 973) scale(.85)"/><use href="#eye" x="286" y="972"/>
<ellipse cx="286" cy="1040" rx="17" ry="10" fill="#444"/>

<rect x="366" y="1045" width="90" height="10.500" fill="#1428d8"/>
<rect x="368" y="966" width="87" height="38" rx="2" fill="#4d58a8"/><use href="#eye" x="381" y="995"/><ellipse cx="411" cy="995" rx="7.500" ry="8" fill="#0f9445"/><path d="M430 995q11-7 22 0q-11 7-22 0z" fill="none" stroke="#0f9445" stroke-width="1.800"/><circle cx="441" cy="995" r="3.500" fill="#0f9445"/><path d="M429 988.500h25M429 1002h25" stroke="#0f9445" stroke-width="3"/>
<rect x="434" y="968" width="20" height="16" rx="3" fill="#d4891a"/><text x="444" y="981" class="xw">X</text><text x="411" y="981" class="w">26</text>
<rect x="368" y="1005" width="87" height="38" rx="1.500" fill="#f0f0f0" stroke="#9aa4e0" stroke-width="1"/><rect x="373" y="1013" width="78" height="20" fill="#fff"/><text x="411" y="1028" class="k">26</text>

<g clip-path="url(#sc)">
<use href="#cell" x="478"/><use href="#cell" x="570.100"/><use href="#cell" x="662.200"/><use href="#cell" x="754.300"/><use href="#cell" x="846.400"/><use href="#cell" x="938.500"/><use href="#cell" x="1030.600"/><use href="#cell" x="1122.700"/><use href="#cell" x="1214.800"/><use href="#cell" x="1306.900"/><use href="#cell" x="1399"/>
<text x="521" y="981" class="w">1</text><text x="613" y="981" class="w">2</text><text x="705" y="981" class="w">3</text><text x="797" y="981" class="w">4</text><text x="889" y="981" class="w">5</text><text x="981" y="981" class="w">6</text><text x="1073" y="981" class="w">7</text><text x="1165" y="981" class="w">8</text><text x="1257" y="981" class="w">9</text><text x="1349" y="981" class="w">10</text><text x="1441" y="981" class="w">11</text>
<text x="554" y="981" class="xw">X</text><text x="646" y="981" class="xw">X</text><text x="738" y="981" class="xw">X</text><text x="830" y="981" class="xw">X</text><text x="922" y="981" class="xw">X</text><text x="1014.500" y="981" class="xw">X</text><text x="1106.600" y="981" class="xw">X</text><text x="1198.700" y="981" class="xw">X</text><text x="1290.800" y="981" class="xw">X</text><text x="1382.900" y="981" class="xw">X</text>
<text x="521" y="1028" class="k">1</text><text x="613" y="1028" class="k">2</text><text x="705" y="1028" class="k">3</text><text x="797" y="1028" class="k">4</text><text x="889" y="1028" class="k">5</text><text x="981" y="1028" class="k">6</text><text x="1073" y="1028" class="k">7</text><text x="1165" y="1028" class="k">8</text><text x="1257" y="1028" class="k">9</text><text x="1349" y="1028" class="k">10</text><text x="1441" y="1028" class="k">11</text>
</g>
<rect x="477" y="1057" width="965" height="16" rx="3" fill="#2c2c2c"/><rect x="477" y="1057" width="390" height="16" rx="3" fill="#7a7a7a"/>
</svg>
</body></html>
